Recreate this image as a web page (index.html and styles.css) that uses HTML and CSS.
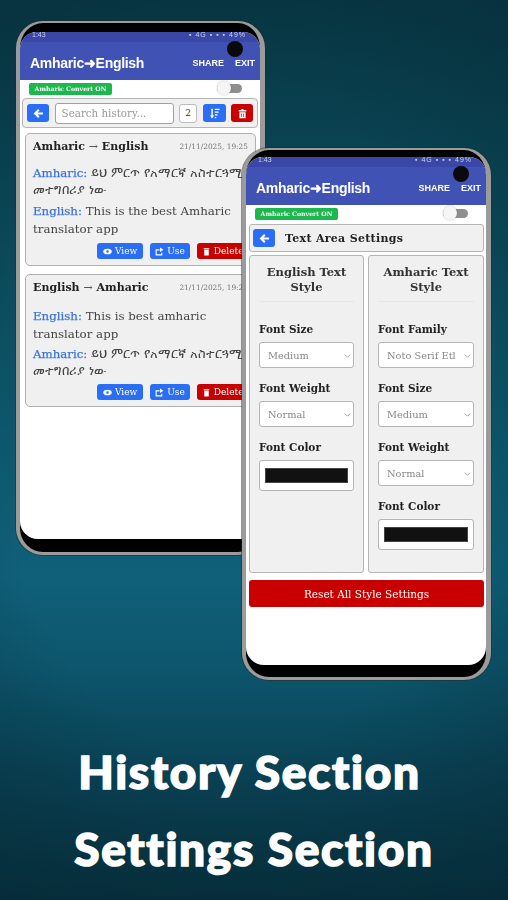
FILE: index.html
```html
<!DOCTYPE html>
<html lang="en">
<head>
<meta charset="utf-8">
<title>Amharic English Translator</title>
<link rel="stylesheet" href="styles.css">
</head>
<body>
<main class="stage">
  <section class="phone phone-history">
    <div class="screen">
      <div class="status"><span>1:43</span><span class="status-right">▪ 4G ▪ ▪ ▪ 49%</span></div>
      <header class="appbar">
        <span class="brand">Amharic➜English</span>
        <span class="action">SHARE</span><span class="action">EXIT</span>
      </header>
      <div class="convert-row"><span class="badge">Amharic Convert ON</span><span class="toggle"><i></i></span></div>
      <div class="toolbar">
        <button class="btn-square blue"><svg viewBox="0 0 16 16"><path d="M8.500 2.500 3 8l5.500 5.500M4 8h10.500" fill="none" stroke="#fff" stroke-width="3"/></svg></button>
        <input class="search" placeholder="Search history...">
        <span class="count">2</span>
        <button class="btn-square blue sort"><svg viewBox="0 0 16 16"><path d="M4.500 1v13" fill="none" stroke="#fff" stroke-width="2.200"/><path d="M1.500 11 4.500 15l3-4z" fill="#fff"/><path d="M8.500 2h7M8.500 6h5.500M8.500 10h4M8.500 14h2" fill="none" stroke="#fff" stroke-width="2"/></svg></button>
        <button class="btn-square red"><svg viewBox="0 0 16 16"><path d="M2.500 3h4V1.500h3V3h4v2h-11zM3.500 6h9v9h-9z" fill="#fff"/><path d="M6.500 8v5M9.500 8v5" stroke="#c80000" stroke-width="1"/></svg></button>
      </div>
      <article class="card">
        <div class="card-head"><b>Amharic <i>→</i> English</b><time>21/11/2025, 19:25</time></div>
        <p class="line am"><b>Amharic:</b> ይህ ምርጥ የአማርኛ አስተርጓሚ መተግበሪያ ነው</p>
        <p class="line"><b>English:</b> This is the best Amharic translator app</p>
        <div class="card-actions">
          <button class="mini blue view"><svg viewBox="0 0 16 16"><ellipse cx="8" cy="8" rx="7.500" ry="5" fill="#fff"/><circle cx="8" cy="8" r="2.200" fill="#2a6ef5"/></svg>View</button>
          <button class="mini blue"><svg viewBox="0 0 16 16"><path d="M1 4h7v2H3v7h8v-3h2v5H1zM9 1l6 4-6 4z" fill="#fff"/></svg>Use</button>
          <button class="mini red"><svg viewBox="0 0 16 16"><path d="M3 2h10v2H3zM4 5h8v10H4z" fill="#fff"/></svg>Delete</button>
        </div>
      </article>
      <article class="card">
        <div class="card-head"><b>English <i>→</i> Amharic</b><time>21/11/2025, 19:25</time></div>
        <p class="line"><b>English:</b> This is best amharic translator app</p>
        <p class="line am"><b>Amharic:</b> ይህ ምርጥ የአማርኛ አስተርጓሚ መተግበሪያ ነው</p>
        <div class="card-actions">
          <button class="mini blue view"><svg viewBox="0 0 16 16"><ellipse cx="8" cy="8" rx="7.500" ry="5" fill="#fff"/><circle cx="8" cy="8" r="2.200" fill="#2a6ef5"/></svg>View</button>
          <button class="mini blue"><svg viewBox="0 0 16 16"><path d="M1 4h7v2H3v7h8v-3h2v5H1zM9 1l6 4-6 4z" fill="#fff"/></svg>Use</button>
          <button class="mini red"><svg viewBox="0 0 16 16"><path d="M3 2h10v2H3zM4 5h8v10H4z" fill="#fff"/></svg>Delete</button>
        </div>
      </article>
    </div>
    <span class="camera"></span>
  </section>

  <section class="phone phone-settings">
    <div class="screen">
      <div class="status"><span>1:43</span><span class="status-right">▪ 4G ▪ ▪ ▪ 49%</span></div>
      <header class="appbar">
        <span class="brand">Amharic➜English</span>
        <span class="action">SHARE</span><span class="action">EXIT</span>
      </header>
      <div class="convert-row"><span class="badge">Amharic Convert ON</span><span class="toggle"><i></i></span></div>
      <div class="settings-head">
        <button class="btn-square blue"><svg viewBox="0 0 16 16"><path d="M8.500 2.500 3 8l5.500 5.500M4 8h10.500" fill="none" stroke="#fff" stroke-width="3"/></svg></button>
        <h2>Text Area Settings</h2>
      </div>
      <div class="columns">
        <div class="column">
          <h3>English Text Style</h3>
          <label>Font Size</label>
          <div class="select">Medium<svg viewBox="0 0 8 8"><path d="m1 3 3 3 3-3" fill="none" stroke="#999"/></svg></div>
          <label>Font Weight</label>
          <div class="select">Normal<svg viewBox="0 0 8 8"><path d="m1 3 3 3 3-3" fill="none" stroke="#999"/></svg></div>
          <label>Font Color</label>
          <div class="color"><span></span></div>
        </div>
        <div class="column">
          <h3>Amharic Text Style</h3>
          <label>Font Family</label>
          <div class="select">Noto Serif Etl<svg viewBox="0 0 8 8"><path d="m1 3 3 3 3-3" fill="none" stroke="#999"/></svg></div>
          <label>Font Size</label>
          <div class="select">Medium<svg viewBox="0 0 8 8"><path d="m1 3 3 3 3-3" fill="none" stroke="#999"/></svg></div>
          <label>Font Weight</label>
          <div class="select">Normal<svg viewBox="0 0 8 8"><path d="m1 3 3 3 3-3" fill="none" stroke="#999"/></svg></div>
          <label>Font Color</label>
          <div class="color"><span></span></div>
        </div>
      </div>
      <button class="reset">Reset All Style Settings</button>
    </div>
    <span class="camera"></span>
  </section>

  <div class="captions">
    <p class="caption-first">History Section</p>
    <p>Settings Section</p>
  </div>
</main>
</body>
</html>
```

FILE: styles.css
```css
* { box-sizing: border-box; }
html, body { margin: 0; padding: 0; }
body { width: 508px; height: 900px; overflow: hidden; font-family: "DejaVu Serif", "Liberation Serif", serif; }

.stage {
  position: relative;
  width: 508px;
  height: 900px;
  overflow: hidden;
  display: flex;
  flex-direction: column;
  justify-content: flex-end;
  background:
    radial-gradient(ellipse 420px 620px at 230px 420px, rgba(6,40,52,0) 55%, rgba(6,40,52,.45) 100%),
    linear-gradient(180deg, #083744 0%, #0a4453 18%, #0c5062 38%, #0f6079 64%, #0d566d 74%, #0a4356 85%, #072f3c 100%);
}

.phone {
  position: absolute;
  width: 249px;
  background: #000;
  border: solid #9b9b9b;
  border-width: 2px 5px 3px 4px;
  border-radius: 27px;
  box-shadow: 0 0 0 1px rgba(40,40,40,.5);
  overflow: hidden;
  filter: blur(.35px);
}
.phone-history { left: 16px; top: 21px; height: 534px; padding-top: 9px; }
.phone-settings { left: 242px; top: 148px; height: 532px; padding-top: 7px; }

.screen {
  width: 240px;
  height: 507px;
  background: #fff;
  border-radius: 17px 17px 18px 18px;
  overflow: hidden;
}
.phone-settings .screen { height: 508px; }

.camera {
  position: absolute;
  left: 207px;
  width: 16px;
  height: 16px;
  border-radius: 50%;
  background: #0a0a0c;
}
.phone-history .camera { top: 18px; }
.phone-settings .camera { top: 16px; }

.status {
  height: 10px;
  background: #3a47a6;
  display: flex;
  justify-content: space-between;
  padding: 0 14px 0 12px;
  font: 7px/6px "Liberation Sans", sans-serif;
  color: #cfd4ef;
}
.status-right { letter-spacing: 1px; }

.appbar {
  height: 38px;
  background: #4152b5;
  display: flex;
  align-items: center;
  padding: 3px 5px 0 10px;
  font-family: "Liberation Sans", sans-serif;
  color: #fff;
  font-weight: 700;
}
.brand { font-size: 14px; letter-spacing: -.3px; margin-right: auto; }
.action { font-size: 9px; margin-left: 11px; }

.convert-row {
  height: 17px;
  display: flex;
  align-items: center;
  justify-content: space-between;
  padding: 0 18px 0 9px;
}
.badge {
  width: 83px;
  height: 12px;
  border-radius: 2px;
  background: #1cb84e;
  color: #fff;
  font-size: 6.200px;
  font-weight: 700;
  line-height: 12px;
  text-align: center;
  white-space: nowrap;
}
.toggle {
  position: relative;
  width: 25px;
  height: 9px;
  border-radius: 5px;
  background: #8f8f8f;
}
.toggle i {
  position: absolute;
  left: 0;
  top: -3px;
  width: 14px;
  height: 14px;
  border-radius: 50%;
  background: #f5f5f5;
  box-shadow: 0 0 2px rgba(0,0,0,.25);
}

button { font-family: inherit; border: 0; padding: 0; }
.blue { background: #2a6ef5; }
.red { background: #c80000; }

.btn-square {
  width: 22px;
  height: 18px;
  border-radius: 3px;
  display: flex;
  align-items: center;
  justify-content: center;
  flex: none;
}
.btn-square svg { width: 11px; height: 11px; }

.toolbar {
  margin: 1px 2px 0;
  height: 30px;
  display: flex;
  align-items: center;
  gap: 5.600px;
  padding: 0 4px;
  background: #f0f0f0;
  border: 1px solid #b5b5b5;
  border-radius: 4px;
}
.search {
  width: 119px;
  height: 21px;
  padding: 0 6px;
  background: #fff;
  border: 1.500px solid #a0a0a0;
  border-radius: 3px;
  font: 10.300px "DejaVu Serif", serif;
  flex: none;
}
.search::placeholder { color: #999; opacity: 1; }
.count {
  width: 18px;
  height: 19px;
  border: 1px solid #bbb;
  border-radius: 3px;
  background: #fff;
  font-size: 9px;
  line-height: 17px;
  text-align: center;
  color: #333;
  flex: none;
}
.sort { width: 23px; }

.card {
  margin: 5px 0 8px 5px;
  width: 231px;
  height: 133px;
  padding: 5px 7px;
  background: #f0f0f0;
  border: 1px solid #b0b0b0;
  border-radius: 5px;
}
.card + .card { margin-top: 0; }
.card-head {
  height: 14px;
  display: flex;
  justify-content: space-between;
  align-items: center;
  font-size: 11px;
  color: #222;
}
.card-head i { font-style: normal; font-weight: 400; color: #555; }
.card-head time { font-size: 7.400px; color: #777; white-space: nowrap; }
.line {
  margin: 12px 0 0;
  font-size: 11.800px;
  line-height: 17.500px;
  color: #444;
  width: 216px;
  height: 35px;
}
.line + .line { margin-top: 3px; }
.card + .card .line:first-of-type { margin-top: 14px; }
.card + .card .card-actions { margin-top: 3px; }
.line b { font-weight: 400; color: #3b74e0; font-size: 11.800px; -webkit-text-stroke: .25px #3b74e0; }
.am { font-size: 12.600px; line-height: 16.500px; }

.card-actions {
  display: flex;
  gap: 7px;
  margin-top: 5px;
  padding-left: 64px;
}
.mini {
  height: 16px;
  padding: 0 5px;
  border-radius: 3px;
  color: #fff;
  font-size: 9px;
  display: flex;
  align-items: center;
  gap: 3px;
  white-space: nowrap;
  flex: none;
}
.mini svg { width: 9px; height: 9px; }
.view { padding: 0 6px; }

.settings-head {
  margin: 2px 2px 0 3px;
  height: 28px;
  display: flex;
  align-items: center;
  gap: 10px;
  padding: 0 3px;
  background: #f0f0f0;
  border: 1px solid #b5b5b5;
  border-radius: 3px;
}
.settings-head h2 { margin: 0; font-size: 11px; font-weight: 700; letter-spacing: .3px; color: #222; }

.columns {
  margin: 3px 3px 0;
  display: grid;
  grid-template-columns: 115px 116px;
  gap: 4px;
  height: 318px;
}
.column {
  padding: 9px 9px 0;
  background: #f0f0f0;
  border: 1px solid #b5b5b5;
  border-radius: 3px;
}
.column h3 {
  margin: 0 0 20px;
  padding: 0 4px 6px;
  height: 37px;
  font-size: 11.500px;
  line-height: 15px;
  font-weight: 700;
  text-align: center;
  color: #333;
  border-bottom: 1px solid #e6e6e6;
}
.column label {
  display: block;
  height: 14px;
  margin-bottom: 6px;
  font-size: 10.500px;
  line-height: 14px;
  font-weight: 700;
  color: #222;
}
.select {
  display: flex;
  align-items: center;
  justify-content: space-between;
  height: 26px;
  margin-bottom: 13px;
  padding: 0 2px 0 8px;
  background: #fff;
  border: 1px solid #b5b5b5;
  border-radius: 3px;
  font-size: 9.800px;
  color: #888;
  white-space: nowrap;
  overflow: hidden;
}
.select svg { width: 7px; height: 7px; flex: none; }
.color {
  height: 31px;
  padding: 7px 5px;
  background: #fff;
  border: 1px solid #b5b5b5;
  border-radius: 3px;
}
.color span { display: block; height: 15px; background: #111; border: 1px solid #444; }

.reset {
  display: block;
  margin: 7px 3px 0;
  width: 235px;
  height: 27px;
  background: #c80000;
  color: #fff;
  border-radius: 3px;
  font-size: 10.500px;
}

.captions { padding-bottom: 13px; }
.captions p {
  margin: 0;
  height: 76.500px;
  font-family: "Lato", "Open Sans", sans-serif;
  font-weight: 900;
  font-size: 46px;
  line-height: 76.500px;
  text-align: center;
  color: #fff;
  letter-spacing: 1.700px;
  -webkit-text-stroke: 1.500px #fff;
}
.captions .caption-first { padding-right: 9px; }
```
